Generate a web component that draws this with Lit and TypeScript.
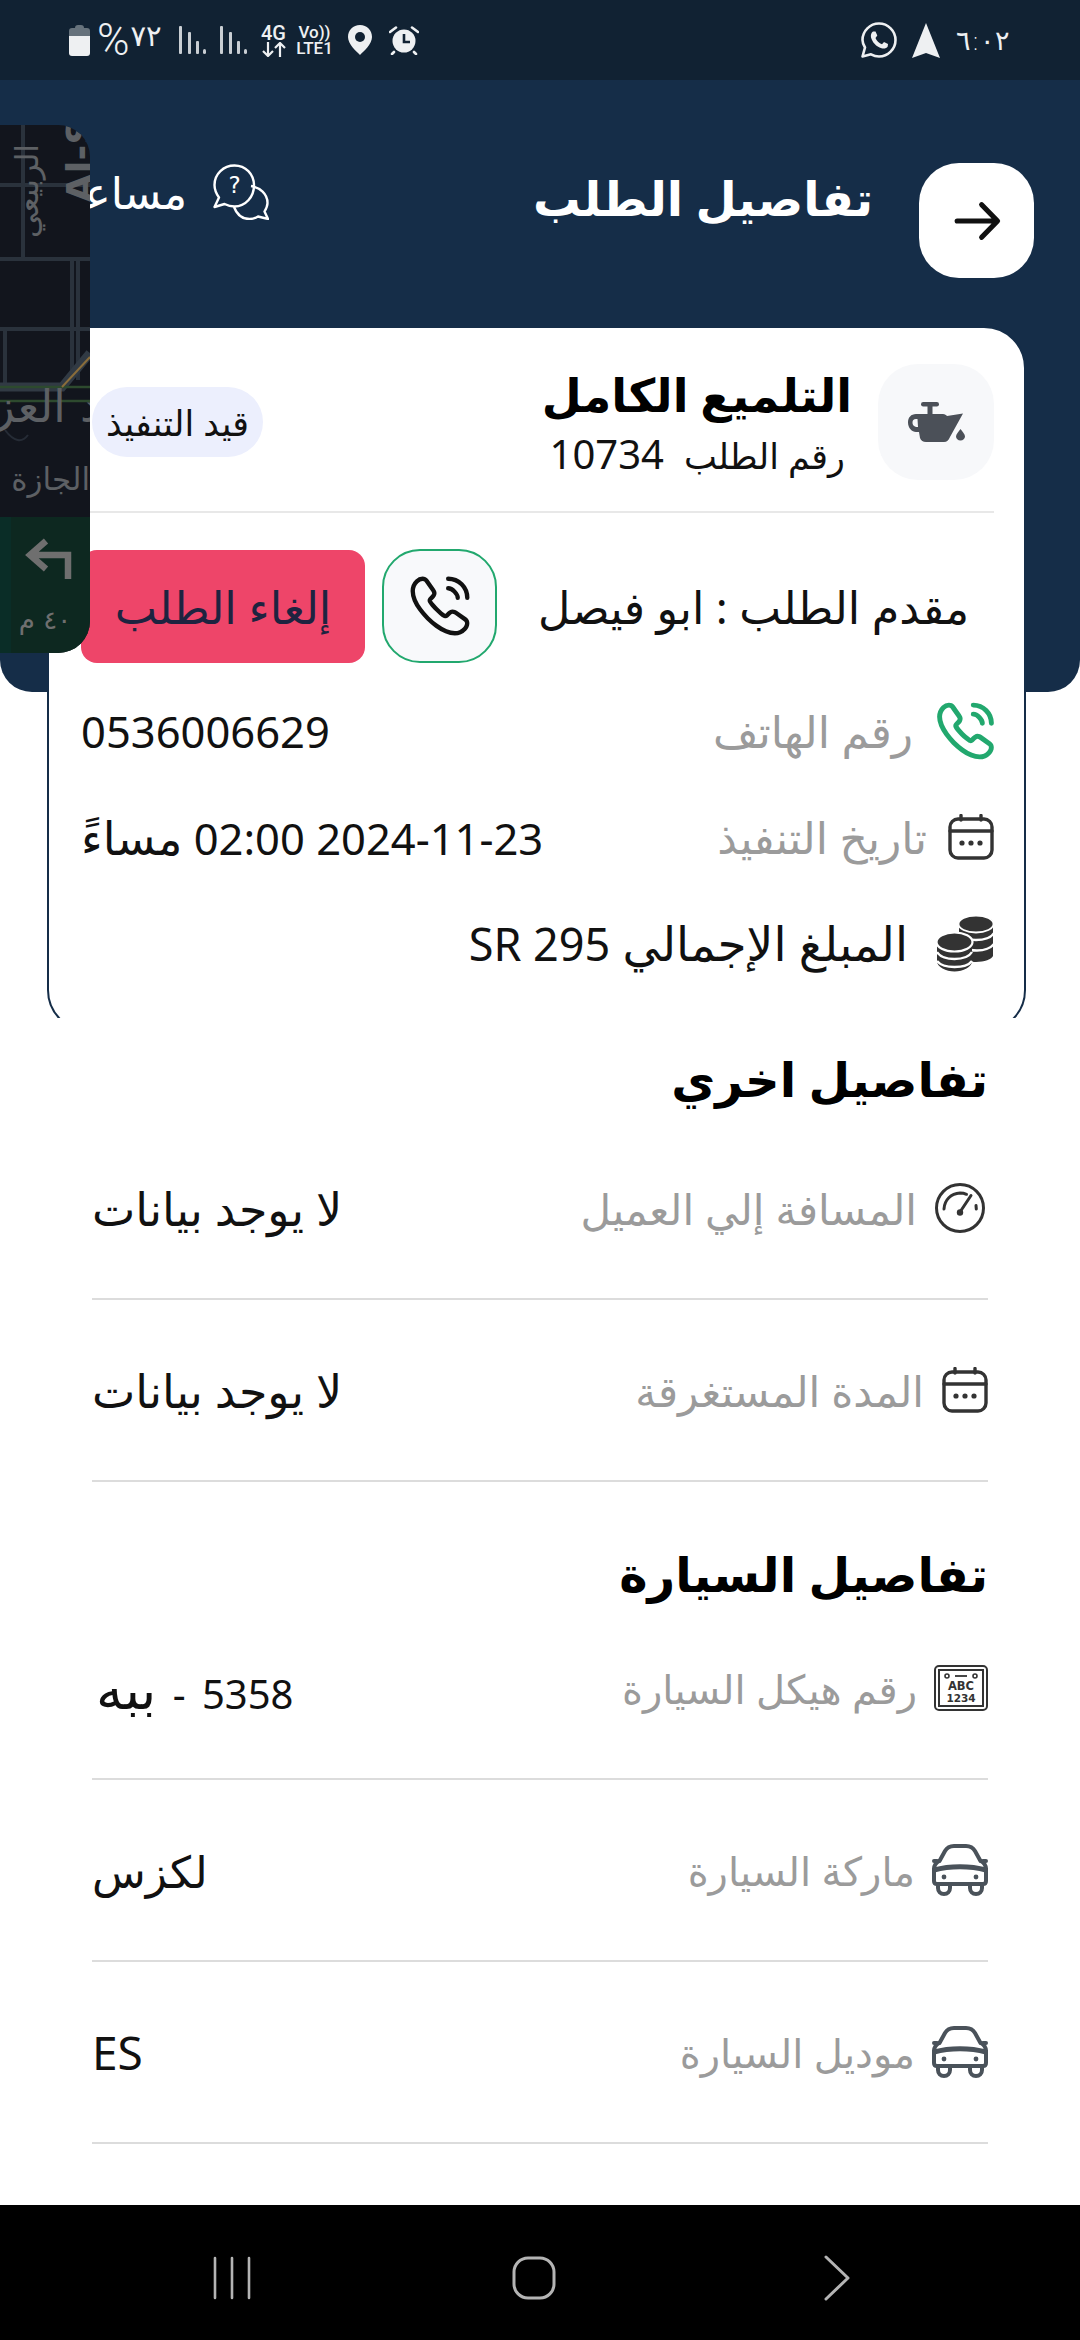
import { LitElement, html, css, svg } from "lit";
import { customElement } from "lit/decorators.js";

const phoneBody = "M21.97 18.33c0 .36-.08.73-.25 1.09-.17.36-.39.7-.68 1.02-.49.54-1.03.93-1.64 1.18-.6.25-1.25.38-1.95.38-1.02 0-2.11-.24-3.26-.73s-2.3-1.15-3.44-1.98a28.75 28.75 0 0 1-3.28-2.8 28.414 28.414 0 0 1-2.79-3.27c-.82-1.14-1.48-2.28-1.96-3.41C2.24 8.67 2 7.58 2 6.54c0-.68.12-1.33.36-1.93.24-.61.62-1.17 1.15-1.67C4.15 2.31 4.85 2 5.59 2c.28 0 .56.06.81.18.26.12.49.3.67.56l2.32 3.27c.18.25.31.48.4.7.09.21.14.42.14.61 0 .24-.07.48-.21.71-.13.23-.32.47-.56.71l-.76.79c-.11.11-.16.24-.16.4 0 .08.01.15.03.23.03.08.06.14.08.2.18.33.49.76.93 1.28.45.52.93 1.05 1.45 1.58.54.53 1.06 1.02 1.59 1.47.52.44.95.74 1.29.92.05.02.11.05.18.08.08.03.16.04.25.04.17 0 .3-.06.41-.17l.76-.75c.25-.25.49-.44.72-.56.23-.14.46-.21.71-.21.19 0 .39.04.61.13.22.09.45.22.7.39l3.31 2.35c.26.18.44.39.55.64.1.25.16.5.16.78Z";

const callIcon = (size: number, color: string, sw: number) => html`<svg width=${size} height=${size} viewBox="1 1 22 22" fill="none" stroke=${color} stroke-width=${sw} stroke-linecap="round" stroke-linejoin="round"><path d=${phoneBody}/><path d="M18.5 9c0-.6-.47-1.52-1.17-2.27-.64-.69-1.49-1.23-2.33-1.23"/><path d="M22 9c0-3.87-3.13-7-7-7"/></svg>`;

const calendar = () => html`<svg width="46" height="46" viewBox="0 0 46 46" fill="none" stroke="#333" stroke-width="3.4" stroke-linecap="round"><rect x="2" y="5" width="42" height="39" rx="8"/><path d="M2 17H44M13 1.5V6M33 1.5V6"/><circle cx="14" cy="29" r="2.6" fill="#333" stroke="none"/><circle cx="23" cy="29" r="2.6" fill="#333" stroke="none"/><circle cx="32" cy="29" r="2.6" fill="#333" stroke="none"/></svg>`;

const gauge = () => html`<svg class="gauge" width="50" height="50" viewBox="0 0 50 50" fill="none" stroke="#333" stroke-width="3" stroke-linecap="round"><circle cx="25" cy="25" r="23.5"/><path d="M9 26C9.5 17 16 10.5 25 10c2.500 0 4.500.4 6.500 1.300"/><path d="M41 22.500 41.300 26"/><path d="M25 29 36 12.500" stroke-width="3"/><circle cx="25" cy="29.500" r="3.200" fill="#333" stroke="none"/></svg>`;

const plate = () => html`<svg width="54" height="46" viewBox="0 0 54 46" fill="none" stroke="#333"><rect x="1" y="1" width="52" height="44" rx="4" stroke-width="2"/><rect x="5" y="5" width="44" height="36" stroke-width="2"/><circle cx="13" cy="11" r="2" stroke-width="1.600"/><circle cx="41" cy="11" r="2" stroke-width="1.600"/><path d="M21 11H33" stroke-width="1.800"/><text x="27" y="25" text-anchor="middle" font-family="DejaVu Sans" font-size="11.500" font-weight="700" fill="#333" stroke="none">ABC</text><text x="27" y="36.500" text-anchor="middle" font-family="DejaVu Sans" font-size="10.500" font-weight="700" fill="#333" stroke="none">1234</text></svg>`;

const car = () => html`<svg width="56" height="52" viewBox="0 0 56 52" fill="none" stroke="#4a525a" stroke-width="4" stroke-linecap="round" stroke-linejoin="round"><path d="M7.500 17 13 7C15 3.500 17.500 2 22 2H34C38.500 2 41 3.500 43 7L48.500 17"/><path d="M7 17C3.500 19 2 21 2 25V37C2 39 3 40 5 40H51C53 40 54 39 54 37V25C54 21 52.500 19 49 17"/><path d="M2 26C18 21.500 38 21.500 54 26" stroke-width="5"/><path d="M5 17H2M51 17H54"/><circle cx="12" cy="33" r="2.400" fill="#4a525a" stroke="none"/><circle cx="44" cy="33" r="2.400" fill="#4a525a" stroke="none"/><path d="M6 41V44C6 47.500 8.500 50 12 50S18 47.500 18 44V41M38 41V44C38 47.500 40.500 50 44 50S50 47.500 50 44V41"/></svg>`;

const oil = () => html`<svg width="58" height="42" viewBox="0 0 58 42" fill="#4b5058"><rect x="14" y="1" width="18" height="4.500" rx="2.200"/><rect x="20.500" y="4" width="5" height="9"/><path d="M9 13H36C38 13 39 14 40 15L56 12.500 43 36C41.500 39.500 40 41 37 41H19C16 41 14 39.500 13 37L12 31H9C5 31 1 27 1 21.500 1 16.500 4 13 9 13ZM9 18C6.500 18 5.500 19.500 5.500 21.500 5.500 24 7 26 11 26L10.500 18Z" fill-rule="evenodd"/><path d="M53.500 28C55.500 31 58 33 58 35.500 58 37.800 56 39.500 53.500 39.500S49 37.800 49 35.500C49 33 51.500 31 53.500 28Z"/></svg>`;

const coins = () => html`<svg width="57" height="57" viewBox="0 0 57 57" fill="#333">
  <path d="M22 9V42C26 46 35 47 39 47 47 47 55 44 56 41V9Z"/>
  <g fill="none" stroke="#fff" stroke-width="2.400"><path d="M22 20C26 24 33 25 39 25 47 25 54 23 57 18"/><path d="M34 35C36 35.500 38 35.500 40 35.500 47 35.500 54 33 57 29"/></g>
  <ellipse cx="39" cy="9" rx="17.500" ry="8.500" stroke="#fff" stroke-width="1.800"/>
  <path d="M0 27V46C0 52 9 56.500 17.500 56.500S35 52 35 46V27Z"/>
  <g fill="none" stroke="#fff" stroke-width="2.400"><path d="M0 37C3 42 10 44 17.500 44S32 42 35 37"/><path d="M0 46C3 50 10 52 17.500 52S32 50 35 46"/></g>
  <ellipse cx="17.500" cy="27" rx="18" ry="9.500" stroke="#fff" stroke-width="2.200"/>
</svg>`;

const help = () => html`<svg width="56" height="56" viewBox="0 0 56 56" fill="none" stroke="#fff" stroke-width="2.400" stroke-linejoin="round"><path d="M21.500 1.500C10.500 1.500 1.500 10 1.500 21C1.500 26 3.500 30 6 33.500L1.500 43 11.500 40C14.500 41.500 18 42.500 21.500 42.500C32.500 42.500 41 33 41 21.500C41 10 32.500 1.500 21.500 1.500Z"/><path d="M38 22C47 23.500 54.500 30 54.500 39C54.500 42.500 53 45 51.500 47.500L55 55 45 52.500C42.500 54 39.500 55 36.500 55C29 55 24 51 21 43"/><text x="21.500" y="29" text-anchor="middle" font-family="DejaVu Sans" font-size="23" fill="#fff" stroke="none">?</text></svg>`;

const whatsapp = () => html`<svg width="36" height="36" viewBox="0 0 36 36" fill="none" stroke="#eef0f2" stroke-width="2.600"><path d="M1.500 34.500 4 25.500C2.500 23 1.500 20.500 1.500 18 1.500 9 9 1.500 18 1.500S34.500 9 34.500 18 27 34.500 18 34.500C15 34.500 12.500 33.700 10 32.300Z" stroke-linejoin="round"/><path d="M12 9.500 14.500 9.500 16.300 13.500 14.500 16C15.500 19 18 21 21 22.200L23 20 27 22 26.700 24.500C25.500 26.500 23 27 20.500 26.300 15 24.500 11.500 20.500 10 15.500 9.500 13 10.300 10.700 12 9.500Z" fill="#eef0f2" stroke="none"/></svg>`;

const signal = () => html`<svg width="27" height="28" viewBox="0 0 27 28" fill="#c9ced3"><rect x="0" y="0" width="3" height="28" rx="1"/><rect x="9" y="6" width="3" height="22" rx="1"/><rect x="17" y="15" width="3" height="13" rx="1"/><rect x="24" y="23" width="3" height="5" rx="1.500"/></svg>`;

const mapSvg = svg`
  <g fill="none" stroke="#2a323c" stroke-width="4">
    <path d="M0 60H90M23 0V134M0 134H90M72 134V255M78 134V255M0 204H90M5 204V262"/>
    <path d="M0 262 62 262 90 228" stroke="#313a44" stroke-width="9"/>
    <path d="M0 262H90M0 276H90" stroke="#2d4a2e" stroke-width="2.500"/>
    <path d="M62 262 90 232" stroke="#8a6d3b" stroke-width="2"/>
    <path d="M5 305C14 317 22 318 28 310" stroke="#262c36" stroke-width="2"/>
  </g>
  <g fill="#5d6064" font-family="DejaVu Sans">
    <text transform="translate(38 113) rotate(-90)" font-size="31">الربيعي</text>
    <text transform="translate(93 78) rotate(-90)" font-size="38" font-weight="700">Al-S</text>
    <text x="100" y="297" text-anchor="end" font-size="45">د العز</text>
    <text x="90" y="365" text-anchor="end" font-size="31">الجازة</text>
  </g>
`;

const detail = (icon: unknown, label: unknown, value: unknown, cls = "") => html`
  <div class="d-row">
    ${icon}
    <span class="d-label ${cls}">${label}</span>
    <span class="d-value">${value}</span>
  </div>`;

@customElement("app-root")
export class AppRoot extends LitElement {
  static styles = css`
    :host { display: block; width: 1080px; height: 2340px; overflow: hidden; background: #fff; font-family: "Noto Sans", "DejaVu Sans", sans-serif; }
    .page { position: relative; display: flex; flex-direction: column; width: 1080px; height: 2340px; }

    .status { flex: none; height: 80px; background: #112233; display: flex; justify-content: space-between; align-items: center; padding: 0 70px 0 69px; direction: ltr; color: #eef0f2; box-sizing: border-box; }
    .st-l, .st-r { display: flex; align-items: center; }
    .st-l { gap: 14px; }
    .st-r { gap: 15px; }
    .pct { display: flex; align-items: center; margin-left: -7px; width: 68px; height: 40px; }
    .pct b { font: 300 44px/40px "Roboto", sans-serif; }
    .pct i { font: 400 29px/28px "DejaVu Sans", sans-serif; font-style: normal; margin: -8px 0 0 1px; }
    .fourg { display: flex; flex-direction: column; align-items: center; width: 25px; font: 500 20px/18px "Roboto", sans-serif; }
    .volte { display: flex; flex-direction: column; align-items: center; width: 39px; margin-left: -5px; font: 500 17px/16px "Roboto", sans-serif; }
    .alarm { margin-left: 3px; }
    .nav-arrow { flex: none; }
    .time { width: 54px; text-align: center; font: 300 27px "DejaVu Sans", sans-serif; margin-left: 1px; }

    .top { flex: none; height: 938px; overflow: hidden; display: grid; grid-template: 1fr / 1fr; }
    .top > * { grid-area: 1 / 1; }
    .hero { height: 612px; background: #152d48; border-radius: 0 0 32px 32px; }
    .top-in { direction: rtl; display: flex; flex-direction: column; }
    .bar { display: flex; align-items: center; height: 115px; margin: 83px 46px 0 0; }
    .back { width: 115px; height: 115px; border-radius: 40px; background: #fff; display: flex; align-items: center; justify-content: center; flex: none; }
    .title { margin-right: 46px; font-size: 47.500px; font-weight: 700; color: #fff; line-height: 60px; margin-top: -46px; white-space: nowrap; }
    .help { margin-right: auto; display: flex; align-items: center; gap: 26px; width: 269px; height: 60px; color: #fff; font-size: 44px; margin-top: -58px; white-space: nowrap; flex: none; }

    .card { margin: 48px 54px 0 0; height: 706px; width: 979px; box-sizing: border-box; flex: none; background: #fff; border: 2px solid #152d48; border-radius: 42px; padding: 36px 30px 0 32px; }
    .head { display: flex; align-items: center; height: 116px; }
    .tile { width: 116px; height: 116px; border-radius: 40px; background: #f7f8fa; display: flex; align-items: center; justify-content: center; flex: none; }
    .name { margin-right: 26px; padding-top: 6px; }
    .name-a { font-size: 46px; font-weight: 700; color: #000; line-height: 50px; }
    .name-b { font-size: 35px; color: #111; line-height: 50px; margin: 10px 7px 0 0; white-space: nowrap; }
    .name-b span { font-size: 40px; margin-right: 20px; }
    .badge { margin-right: auto; width: 171px; height: 70px; border-radius: 35px; background: #eceffd; display: flex; align-items: center; justify-content: center; font-size: 35px; color: #111; margin-left: 11px; white-space: nowrap; }
    .sep { height: 2px; background: #e8e8e8; margin-top: 31px; }
    .req { display: flex; align-items: center; margin-top: 36px; height: 114px; }
    .req-t { font-size: 44.500px; color: #111; margin-right: 25px; white-space: nowrap; }
    .call { margin-right: auto; width: 115px; height: 114px; box-sizing: border-box; border: 2.500px solid #22a86e; border-radius: 38px; background: #f8f9fb; display: flex; align-items: center; justify-content: center; flex: none; }
    .cancel { margin-right: 17px; width: 284px; height: 113px; border-radius: 16px; background: #ee4569; color: #1e2340; display: flex; align-items: center; justify-content: center; font-size: 45px; white-space: nowrap; flex: none; }
    .rows { margin-top: 15px; }
    .c-row { display: flex; align-items: center; height: 106px; }
    .c-ic { width: 57px; display: flex; justify-content: flex-start; flex: none; }
    .c-label { font-size: 44px; color: #9b9b9b; white-space: nowrap; }
    .g26 { margin-right: 24px; }
    .g12 { margin-right: 10px; }
    .g31 { margin-right: 29px; color: #111; font-size: 47px; }
    .c-value { margin-right: auto; font-size: 43.500px; color: #111; white-space: nowrap; }
    .big { font-size: 46px; }
    .lat { font-size: 45px; }
    .date { letter-spacing: 1.500px; }

    .low { flex: 1; direction: rtl; padding: 0 92px; background: #fff; }
    h2 { margin: 0; font-size: 48px; font-weight: 700; color: #000; display: flex; align-items: center; box-sizing: border-box; line-height: 60px; }
    .h1 { height: 100px; padding-top: 22px; }
    .h2 { height: 116px; padding-top: 68px; }
    .d-row { display: flex; align-items: center; height: 180px; border-bottom: 2px solid #dcdcdc; }
    .d-row svg { flex: none; }
    .gauge { margin-right: 3px; }
    .d-label { font-size: 42px; color: #9b9b9b; margin-right: 18px; white-space: nowrap; }
    .d-label.sm { font-size: 40px; margin-right: 17px; }
    .d-value { margin-right: auto; font-size: 46px; color: #111; white-space: nowrap; }
    .d-value.x { font-size: 44px; }
    .dig { font-size: 40px; }
    .ar-wide { font-size: 54px; margin-left: 4px; }
    .dash { margin: 0 6px; font-size: 40px; }
    .tight { font-size: 44px; }

    .nav { flex: none; height: 135px; box-sizing: border-box; background: #000; display: grid; grid-template-columns: 213px 38px 261px 44px 268px 26px; align-items: center; padding-top: 10px; }
    .nav svg { display: block; }

    .pip { position: absolute; left: 0; top: 125px; width: 90px; height: 528px; border-radius: 0 32px 32px 0; overflow: hidden; background: #12151d; display: flex; flex-direction: column; }
    .pip-map { flex: none; height: 392px; display: block; }
    .pip-nav { flex: 1; background: linear-gradient(90deg, #0a2d27 0 11px, #0d2820 11px); display: flex; flex-direction: column; align-items: center; color: #6f6f6f; padding-top: 20px; }
    .pip-nav svg { margin-left: 10px; }
    .pip-nav span { font-size: 26px; line-height: 34px; font-family: "DejaVu Sans", sans-serif; direction: rtl; margin-top: 22px; }
  `;

  render() {
    return html`<div class="page">
      <div class="status">
        <div class="st-l">
          <svg width="21" height="31" viewBox="0 0 21 31"><path d="M6 3C6 1 7 0 9 0H12C14 0 15 1 15 3H18C20 3 21 4 21 6V11H0V6C0 4 1 3 3 3Z" fill="#66727c"/><path d="M0 11H21V28C21 30 20 31 18 31H3C1 31 0 30 0 28Z" fill="#eef0f2"/></svg>
          <div class="pct"><b>%</b><i>٧٢</i></div>
          ${signal()}${signal()}
          <div class="fourg"><span>4G</span><svg width="24" height="15" viewBox="0 0 24 15" fill="none" stroke="#eef0f2" stroke-width="2.200"><path d="M6 0V14M1 9 6 14 11 9M18 15V1M13 6 18 1 23 6"/></svg></div>
          <div class="volte"><span>Vo))</span><span>LTE1</span></div>
          <svg width="24" height="30" viewBox="0 0 24 30"><path d="M12 0C5 0 0 5 0 12C0 19 8 26 12 30C16 26 24 19 24 12C24 5 19 0 12 0Z" fill="#eef0f2"/><circle cx="12" cy="12" r="5" fill="#112233"/></svg>
          <svg class="alarm" width="30" height="29" viewBox="0 0 30 29"><circle cx="15" cy="15" r="11.500" fill="#eef0f2"/><path d="M15 8V16H21" fill="none" stroke="#112233" stroke-width="2.600"/><path d="M1 6 7 1.500M29 6 23 1.500M5 26 3 28M25 26 27 28" stroke="#eef0f2" stroke-width="2.600" stroke-linecap="round"/></svg>
        </div>
        <div class="st-r">
          ${whatsapp()}
          <svg class="nav-arrow" width="28" height="35" viewBox="0 0 28 35"><path d="M14 0 28 35 14 30 0 35Z" fill="#eef0f2"/></svg>
          <span class="time">٦:٠٢</span>
        </div>
      </div>

      <div class="top">
        <div class="hero"></div>
        <div class="top-in">
          <div class="bar">
            <div class="back"><svg width="56" height="56" viewBox="0 0 24 24" fill="none" stroke="#111" stroke-width="2.200" stroke-linecap="round" stroke-linejoin="round"><path d="M14 5 20.800 12 14 19M3.500 12H20.300"/></svg></div>
            <div class="title">تفاصيل الطلب</div>
            <div class="help">${help()}<span>مساعدة</span></div>
          </div>
          <div class="card">
            <div class="head">
              <div class="tile">${oil()}</div>
              <div class="name"><div class="name-a">التلميع الكامل</div><div class="name-b">رقم الطلب<span>10734</span></div></div>
              <div class="badge">قيد التنفيذ</div>
            </div>
            <div class="sep"></div>
            <div class="req">
              <div class="req-t">مقدم الطلب : ابو فيصل</div>
              <div class="call">${callIcon(60, "#111", 1.6)}</div>
              <div class="cancel">إلغاء الطلب</div>
            </div>
            <div class="rows">
              <div class="c-row"><span class="c-ic">${callIcon(58, "#22a86e", 1.9)}</span><span class="c-label g26">رقم الهاتف</span><span class="c-value">0536006629</span></div>
              <div class="c-row"><span class="c-ic">${calendar()}</span><span class="c-label g12">تاريخ التنفيذ</span><span class="c-value"><span class="date">2024-11-23</span> 02:00 <span class="big">مساءً</span></span></div>
              <div class="c-row"><span class="c-ic">${coins()}</span><span class="c-label g31">المبلغ الإجمالي <span class="lat">SR 295</span></span></div>
            </div>
          </div>
        </div>
      </div>

      <div class="low">
        <h2 class="h1">تفاصيل اخري</h2>
        ${detail(gauge(), "المسافة إلي العميل", "لا يوجد بيانات")}
        ${detail(calendar(), "المدة المستغرقة", "لا يوجد بيانات")}
        <h2 class="h2">تفاصيل السيارة</h2>
        ${detail(plate(), "رقم هيكل السيارة", html`<span class="dig">5358</span><span class="dash"> - </span><span class="ar-wide">ببه</span>`, "sm")}
        ${detail(car(), "ماركة السيارة", html`<span class="tight">لكزس</span>`, "sm")}
        ${detail(car(), "موديل السيارة", "ES", "sm")}
      </div>

      <div class="nav">
        <span></span>
        <svg width="38" height="44" viewBox="0 0 38 44" stroke="#b4b4b4" stroke-width="2.600" stroke-linecap="round"><path d="M2 2V42M19 2V42M36 2V42"/></svg>
        <span></span>
        <svg width="44" height="44" viewBox="0 0 44 44" fill="none" stroke="#b4b4b4" stroke-width="3"><rect x="2" y="2" width="40" height="40" rx="14"/></svg>
        <span></span>
        <svg width="26" height="46" viewBox="0 0 26 46" fill="none" stroke="#b4b4b4" stroke-width="3" stroke-linecap="round" stroke-linejoin="round"><path d="M2 2 24 23 2 44"/></svg>
      </div>

      <div class="pip">
        <svg class="pip-map" width="90" height="392" viewBox="0 0 90 392">${mapSvg}</svg>
        <div class="pip-nav">
          <svg width="60" height="44" viewBox="0 0 60 44" fill="none" stroke="#6f6f6f" stroke-width="6.500"><path d="M48 42V18H12M26 4 10 18 26 32"/></svg>
          <span>٤٠ م</span>
        </div>
      </div>
    </div>`;
  }
}
